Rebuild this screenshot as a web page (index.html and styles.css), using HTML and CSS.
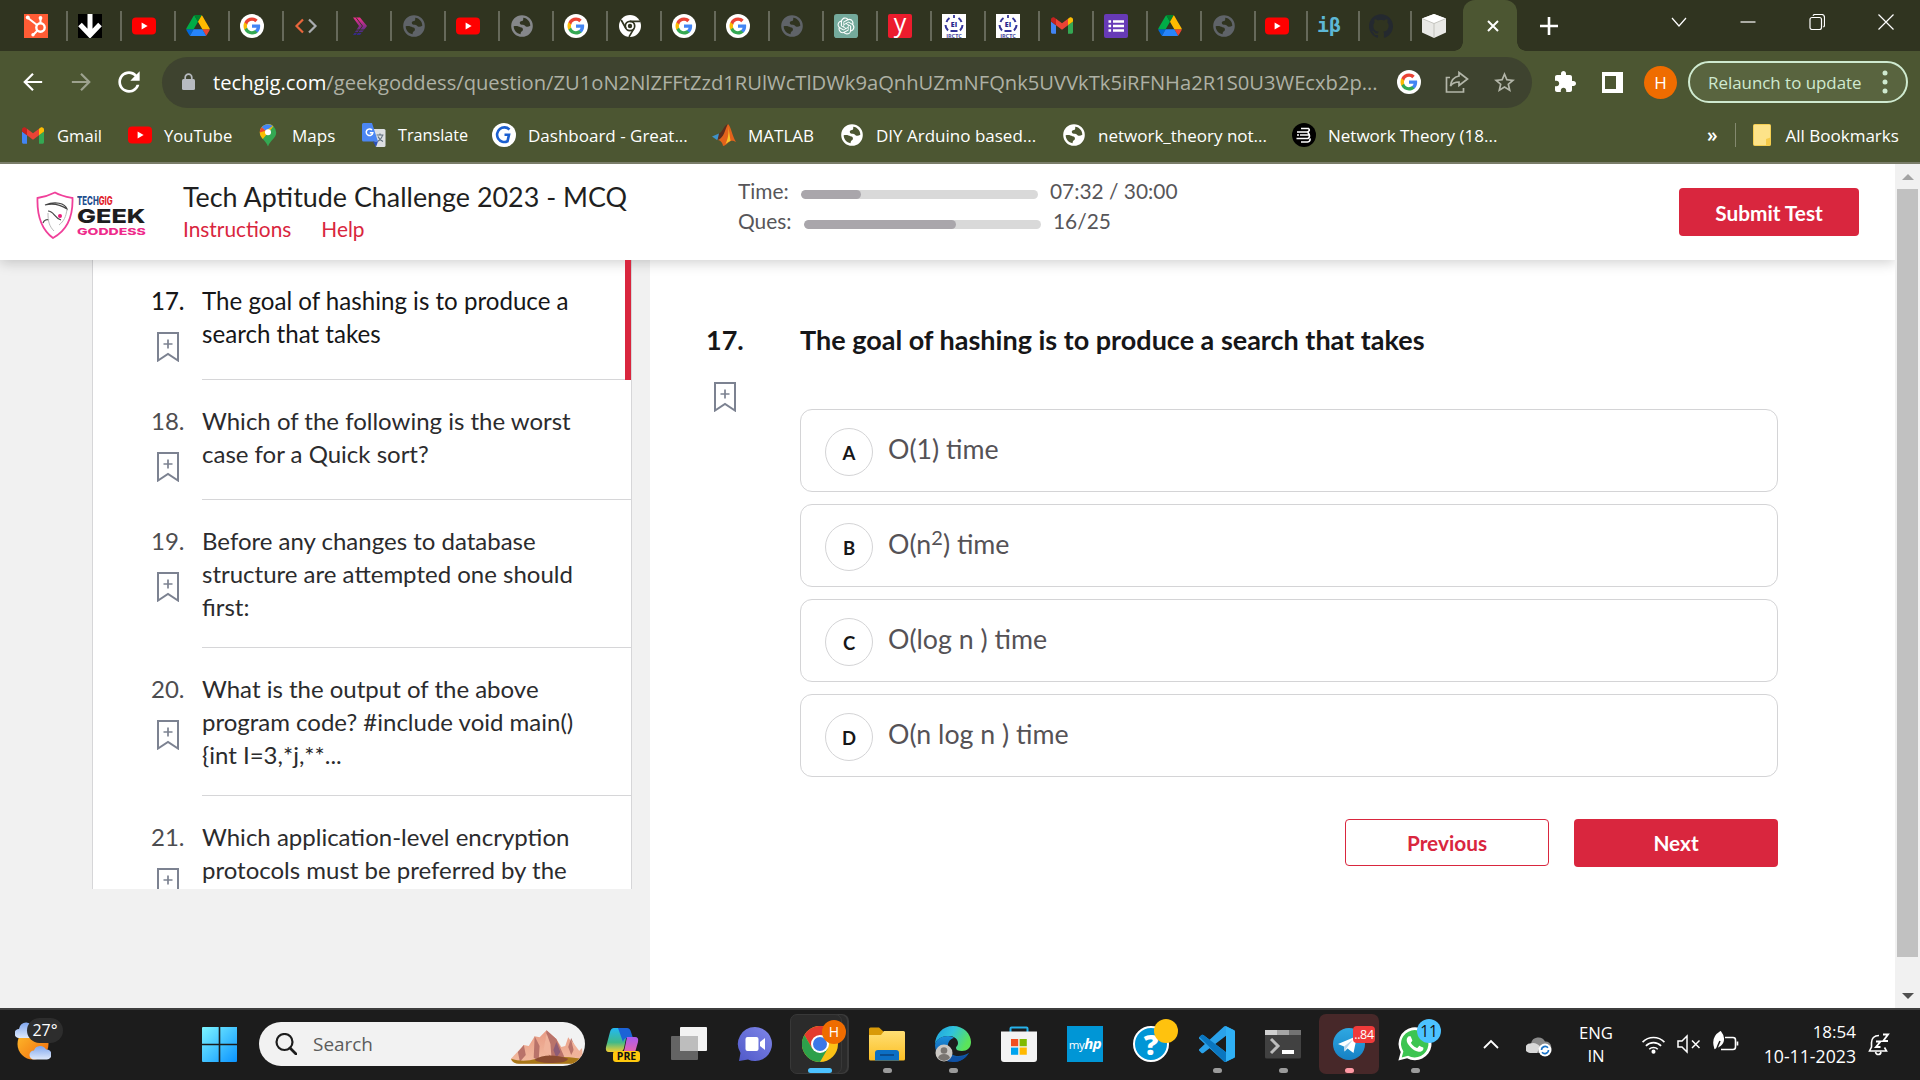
FILE: index.html
```html
<!DOCTYPE html>
<html lang="en">
<head>
<meta charset="utf-8">
<title>Tech Aptitude Challenge 2023 - MCQ</title>
<link rel="stylesheet" href="styles.css">
</head>
<body>
<svg class="defs" aria-hidden="true">
  <defs>
    <linearGradient id="gFlame" x1="0" y1="0" x2="0" y2="1"><stop offset="0" stop-color="#f2308c"/><stop offset="1" stop-color="#2b2a86"/></linearGradient>
    <linearGradient id="gSun" x1="0" y1="0" x2="1" y2="1"><stop offset="0" stop-color="#ffc02e"/><stop offset="1" stop-color="#f06a0c"/></linearGradient>
    <linearGradient id="gCloud" x1="0" y1="0" x2="0" y2="1"><stop offset="0" stop-color="#7fa6ee"/><stop offset="1" stop-color="#dfe9fb"/></linearGradient>
    <linearGradient id="gWin" x1="0" y1="0" x2="1" y2="1"><stop offset="0" stop-color="#7df5ff"/><stop offset="1" stop-color="#0a93ff"/></linearGradient>
    <linearGradient id="gRock" x1="0" y1="0" x2="0" y2="1"><stop offset="0" stop-color="#e89b84"/><stop offset="1" stop-color="#f3bda2"/></linearGradient>
    <linearGradient id="gCopA" x1="0" y1="0" x2="0" y2="1"><stop offset="0" stop-color="#22b8f5"/><stop offset=".6" stop-color="#3fb98a"/><stop offset="1" stop-color="#f4cf2f"/></linearGradient>
    <linearGradient id="gCopB" x1="0" y1="0" x2="0" y2="1"><stop offset="0" stop-color="#a95cf0"/><stop offset="1" stop-color="#f5669a"/></linearGradient>
    <linearGradient id="gChat" x1="0" y1="1" x2="1" y2="0"><stop offset="0" stop-color="#5059c9"/><stop offset="1" stop-color="#7f86e8"/></linearGradient>
    <linearGradient id="gFolder" x1="0" y1="0" x2="0" y2="1"><stop offset="0" stop-color="#ffdf74"/><stop offset="1" stop-color="#fcbf24"/></linearGradient>
    <linearGradient id="gEdgeA" x1="0" y1="0" x2="1" y2=".4"><stop offset="0" stop-color="#1d9fe0"/><stop offset=".5" stop-color="#30c3dc"/><stop offset="1" stop-color="#5be35a"/></linearGradient>
    <linearGradient id="gEdgeB" x1="0" y1="0" x2="0" y2="1"><stop offset="0" stop-color="#1b90dd"/><stop offset="1" stop-color="#0f4c9c"/></linearGradient>
    <linearGradient id="gTg" x1="0" y1="0" x2="0" y2="1"><stop offset="0" stop-color="#2fa8e2"/><stop offset="1" stop-color="#1681c4"/></linearGradient>

    <symbol id="youtube" viewBox="0 0 24 24"><rect y="3.5" width="24" height="17" rx="4" fill="#f00"/><path d="M9.6 8.4v7.2l6-3.6z" fill="#fff"/></symbol>
    <symbol id="drive" viewBox="0 0 87.3 78"><path d="m6.6 66.85 3.85 6.65c.8 1.4 1.95 2.5 3.3 3.3l13.75-23.8h-27.5c0 1.55.4 3.1 1.2 4.5z" fill="#0066da"/><path d="m43.65 25-13.75-23.8c-1.35.8-2.5 1.9-3.3 3.3l-25.4 44a9.06 9.06 0 0 0 -1.2 4.5h27.5z" fill="#00ac47"/><path d="m73.55 76.8c1.35-.8 2.5-1.9 3.3-3.3l1.6-2.75 7.65-13.25c.8-1.4 1.2-2.95 1.2-4.5h-27.502l5.852 11.5z" fill="#ea4335"/><path d="m43.65 25 13.75-23.8c-1.35-.8-2.9-1.2-4.5-1.2h-18.5c-1.6 0-3.15.45-4.5 1.2z" fill="#00832d"/><path d="m59.8 53h-32.3l-13.75 23.8c1.35.8 2.9 1.2 4.5 1.2h50.8c1.6 0 3.15-.45 4.5-1.2z" fill="#2684fc"/><path d="m73.4 26.5-12.7-22c-.8-1.4-1.95-2.5-3.3-3.3l-13.75 23.8 16.15 28h27.45c0-1.55-.4-3.1-1.2-4.5z" fill="#ffba00"/></symbol>
    <symbol id="google" viewBox="-3.5 -3.5 31 31"><circle cx="12" cy="12" r="15.5" fill="#fff"/><path d="M22.56 12.25c0-.78-.07-1.53-.2-2.25H12v4.26h5.92c-.26 1.37-1.04 2.53-2.21 3.31v2.77h3.57c2.08-1.92 3.28-4.74 3.28-8.09z" fill="#4285f4"/><path d="M12 23c2.97 0 5.46-.98 7.28-2.66l-3.57-2.77c-.98.66-2.23 1.06-3.71 1.06-2.86 0-5.29-1.93-6.16-4.53H2.18v2.84C3.99 20.53 7.7 23 12 23z" fill="#34a853"/><path d="M5.84 14.09c-.22-.66-.35-1.36-.35-2.09s.13-1.43.35-2.09V7.07H2.18C1.43 8.55 1 10.22 1 12s.43 3.45 1.18 4.93l2.85-2.22.81-.62z" fill="#fbbc05"/><path d="M12 5.38c1.62 0 3.06.56 4.21 1.64l3.15-3.15C17.45 2.09 14.97 1 12 1 7.7 1 3.99 3.47 2.18 7.07l3.66 2.84c.87-2.6 3.3-4.53 6.16-4.53z" fill="#ea4335"/></symbol>
    <symbol id="gmail" viewBox="52 42 88 66"><path d="M58 108h14V74L52 59v43c0 3.32 2.69 6 6 6" fill="#4285f4"/><path d="M120 108h14c3.32 0 6-2.69 6-6V59l-20 15" fill="#34a853"/><path d="M120 48v26l20-15v-8c0-7.42-8.47-11.65-14.4-7.2" fill="#fbbc04"/><path d="M72 74V48l24 18 24-18v26L96 92" fill="#ea4335"/><path d="M52 51v8l20 15V48l-5.6-4.2c-5.94-4.45-14.4-.22-14.4 7.2" fill="#c5221f"/></symbol>
    <symbol id="globe" viewBox="0 0 24 24"><path fill-rule="evenodd" d="M12 1.2a10.8 10.8 0 1 0 0 21.6a10.8 10.8 0 0 0 0-21.6zM13.2 3.8C17.4 4.2 20.3 7.8 20.3 11.8C18 13.4 15.8 13 14.8 11.6C13.800 10.300 11 11.400 10 9.800C9.200 8.200 10.600 7.200 12 7.100C13.200 7 13.400 5.500 13.200 3.800zM3.700 12.300C6.500 11.500 9 12.400 10.400 13.300C12.200 13.600 13.200 14.400 12.900 16C12.400 17.700 10.600 17.200 10.600 20.200C6.500 19.500 3.700 16.300 3.700 12.300z" fill="currentColor"/></symbol>
    <symbol id="bookmark" viewBox="0 0 22 30"><path d="M1 1h20v27.500l-10-6.500-10 6.500z" fill="none" stroke="#7c8291" stroke-width="2"/><path d="M11 7.500v9M6.500 12h9" stroke="#7c8291" stroke-width="1.700"/></symbol>
    <symbol id="hubspot" viewBox="0 0 24 24"><path d="M0 0h24v24H0z" fill="#ff5c35"/><g fill="none" stroke="#fff" stroke-width="2"><circle cx="16.500" cy="13.500" r="4.200" stroke-width="2.400"/><path d="M16.500 9V4.500M13 11 4 4M13.500 16.500l-4 4"/></g><g fill="#fff"><circle cx="16.500" cy="4" r="1.900"/><circle cx="3.800" cy="3.500" r="2"/><circle cx="9" cy="20.800" r="1.700"/></g></symbol>
    <symbol id="chromemono" viewBox="0 0 24 24"><circle cx="12" cy="12" r="11" fill="#fff"/><g fill="none" stroke="#303420" stroke-width="1.700"><circle cx="12" cy="12" r="4.700"/><path d="M12 7.300h10M8 14.500 3.200 6M16 14.400l-5 8.500"/></g><circle cx="12" cy="12" r="2.200" fill="#303420"/></symbol>
    <symbol id="openai" viewBox="-5 -5 34 34"><rect x="-5" y="-5" width="34" height="34" rx="4" fill="#74aa9c"/><path fill="#fff" d="M22.282 9.821a5.985 5.985 0 0 0-.516-4.91 6.046 6.046 0 0 0-6.51-2.9A6.065 6.065 0 0 0 4.981 4.182a5.985 5.985 0 0 0-3.998 2.9 6.046 6.046 0 0 0 .743 7.097 5.98 5.98 0 0 0 .51 4.911 6.051 6.051 0 0 0 6.515 2.9A5.985 5.985 0 0 0 13.26 24a6.056 6.056 0 0 0 5.772-4.206 5.99 5.99 0 0 0 3.997-2.9 6.056 6.056 0 0 0-.747-7.073zm-9.022 12.608a4.476 4.476 0 0 1-2.876-1.04l.141-.081 4.779-2.758a.795.795 0 0 0 .392-.681v-6.737l2.02 1.168a.071.071 0 0 1 .038.052v5.583a4.504 4.504 0 0 1-4.494 4.494zM3.599 18.304a4.471 4.471 0 0 1-.535-3.014l.142.085 4.783 2.759a.771.771 0 0 0 .781 0l5.843-3.369v2.332a.08.08 0 0 1-.033.062L9.74 19.95a4.499 4.499 0 0 1-6.141-1.646zM2.341 7.896a4.485 4.485 0 0 1 2.366-1.973V11.600a.766.766 0 0 0 .388.676l5.814 3.355-2.020 1.168a.076.076 0 0 1-.071 0l-4.830-2.786A4.504 4.504 0 0 1 2.341 7.872zm16.596 3.855-5.833-3.387L15.119 7.200a.076.076 0 0 1 .071 0l4.830 2.791a4.494 4.494 0 0 1-.676 8.104v-5.677a.790.790 0 0 0-.407-.667zm2.011-3.023-.142-.085-4.774-2.782a.776.776 0 0 0-.785 0L9.409 9.230V6.897a.066.066 0 0 1 .028-.061l4.830-2.787a4.499 4.499 0 0 1 6.680 4.660zM8.307 12.863l-2.020-1.164a.080.080 0 0 1-.038-.057V6.074a4.499 4.499 0 0 1 7.376-3.454l-.142.081L8.704 5.459a.795.795 0 0 0-.393.681zm1.097-2.366 2.602-1.500 2.607 1.500v2.999l-2.597 1.500-2.607-1.500z"/></symbol>
    <symbol id="institute" viewBox="0 0 24 24"><path d="M0 0h24v24H0z" fill="#fff"/><g fill="none" stroke="#34349a"><path d="M7.500 4A8 8 0 0 0 4.500 8M3.500 11q0 3 2.500 5.500M16.500 4A8 8 0 0 1 19.500 8M20.500 11q0 3-2.500 5.500" stroke-width="2"/><path d="M12 1v3M8.500 17h7" stroke-width="1.800"/></g><text x="12" y="12.500" text-anchor="middle" font-size="7" font-weight="800" fill="#26268c" font-family="Open Sans">EI</text><text x="12" y="23.600" text-anchor="middle" font-size="5.500" font-weight="700" fill="#4a4aa0" font-family="Open Sans">IRCTC</text></symbol>
    <symbol id="forms" viewBox="0 0 24 24"><rect width="24" height="24" rx="2" fill="#673ab7"/><path d="M9 7.500h11M9 12h11M9 16.500h11M4.500 7.500h2.600M4.500 12h2.600M4.500 16.500h2.600" stroke="#fff" stroke-width="2.400"/></symbol>
  </defs>
</svg>

<header class="browser">
  <div class="tabstrip">
    <div class="tab"><svg class="fav"><use href="#hubspot"/></svg></div>
    <div class="tab"><svg class="fav" viewBox="0 0 24 24"><path d="M0 0h24v24H0z" fill="#000"/><path d="M12 0v20M2 10.500 12 21l10-10.500" fill="none" stroke="#fff" stroke-width="5"/></svg></div>
    <div class="tab"><svg class="fav"><use href="#youtube"/></svg></div>
    <div class="tab"><svg class="fav fav-drive"><use href="#drive"/></svg></div>
    <div class="tab"><svg class="fav"><use href="#google"/></svg></div>
    <div class="tab"><svg class="fav" viewBox="0 0 24 24" fill="none" stroke-width="2.200"><path d="M9 5.500 2.500 12 9 18.500" stroke="#e8663c"/><path d="m15 5.500 6.500 6.500-6.500 6.500" stroke="#a9acb0"/></svg></div>
    <div class="tab"><svg class="fav" viewBox="0 0 24 24"><path d="M5 3.500h7l7 8.500-7 9H5l6-9z" fill="url(#gFlame)"/><path d="m8 3.500 6.500 8.500L8 21M4 16h14M4 18.500h13" fill="none" stroke="#303420" stroke-width=".9"/></svg></div>
    <div class="tab"><svg class="fav globe-dim"><use href="#globe"/></svg></div>
    <div class="tab"><svg class="fav"><use href="#youtube"/></svg></div>
    <div class="tab"><svg class="fav globe-mid"><use href="#globe"/></svg></div>
    <div class="tab"><svg class="fav"><use href="#google"/></svg></div>
    <div class="tab"><svg class="fav"><use href="#chromemono"/></svg></div>
    <div class="tab"><svg class="fav"><use href="#google"/></svg></div>
    <div class="tab"><svg class="fav"><use href="#google"/></svg></div>
    <div class="tab"><svg class="fav globe-dim"><use href="#globe"/></svg></div>
    <div class="tab"><svg class="fav"><use href="#openai"/></svg></div>
    <div class="tab"><span class="fav fav-y">y</span></div>
    <div class="tab"><svg class="fav"><use href="#institute"/></svg></div>
    <div class="tab"><svg class="fav"><use href="#institute"/></svg></div>
    <div class="tab"><svg class="fav fav-gmail"><use href="#gmail"/></svg></div>
    <div class="tab"><svg class="fav"><use href="#forms"/></svg></div>
    <div class="tab"><svg class="fav fav-drive"><use href="#drive"/></svg></div>
    <div class="tab"><svg class="fav globe-dim"><use href="#globe"/></svg></div>
    <div class="tab tab-narrow"><svg class="fav"><use href="#youtube"/></svg></div>
    <div class="tab tab-narrow"><span class="fav fav-ib">iβ</span></div>
    <div class="tab tab-narrow"><svg class="fav" viewBox="0 0 24 24"><path fill="#24292f" d="M12 .297c-6.630 0-12 5.373-12 12 0 5.303 3.438 9.800 8.205 11.385.6.113.82-.258.82-.577 0-.285-.01-1.040-.015-2.040-3.338.724-4.042-1.610-4.042-1.610C4.422 18.070 3.633 17.700 3.633 17.700c-1.087-.744.084-.729.084-.729 1.205.084 1.838 1.236 1.838 1.236 1.070 1.835 2.809 1.305 3.495.998.108-.776.417-1.305.760-1.605-2.665-.3-5.466-1.332-5.466-5.930 0-1.310.465-2.380 1.235-3.220-.135-.303-.540-1.523.105-3.176 0 0 1.005-.322 3.300 1.230.960-.267 1.980-.399 3-.405 1.020.006 2.040.138 3 .405 2.280-1.552 3.285-1.230 3.285-1.230.645 1.653.240 2.873.120 3.176.765.840 1.230 1.910 1.230 3.220 0 4.610-2.805 5.625-5.475 5.920.420.360.810 1.096.810 2.220 0 1.606-.015 2.896-.015 3.286 0 .315.210.690.825.570C20.565 22.092 24 17.592 24 12.297c0-6.627-5.373-12-12-12"/></svg></div>
    <div class="tab tab-last"><svg class="fav" viewBox="0 0 24 24"><path d="M12 0 24 4.500v14L12 24 0 18.500v-14z" fill="#e9e9e6"/><path d="M12 0 24 4.500 12 9.500 0 4.500z" fill="#fff"/><path d="M12 9.500v14.500M0 4.500l12 5 12-5" fill="none" stroke="#b9b9b2" stroke-width=".8"/></svg></div>
    <div class="tab-active"><svg viewBox="0 0 14 14"><path d="m2 2 10 10M12 2 2 12" stroke="#fff" stroke-width="2"/></svg></div>
    <svg class="newtab" viewBox="0 0 18 18"><path d="M9 0v18M0 9h18" stroke="#fff" stroke-width="2.600"/></svg>
    <div class="winbuttons">
      <svg viewBox="0 0 16 16"><path d="m1 4 7 8 7-8"/></svg>
      <svg viewBox="0 0 16 16"><path d="M.5 8h15"/></svg>
      <svg viewBox="0 0 16 16"><rect x="1" y="3.500" width="11.500" height="12" rx="2"/><path d="M4 1.800Q4.500.5 6 .5h6.500q3 0 3 3V11q0 1.500-1.200 2"/></svg>
      <svg viewBox="0 0 16 16"><path d="m.5.5 15 15M15.500.5l-15 15"/></svg>
    </div>
  </div>

  <div class="toolbar">
    <svg class="nav" viewBox="0 0 24 24"><path d="M22 12H3M12 3l-9 9 9 9" fill="none" stroke="#fff" stroke-width="2.400"/></svg>
    <svg class="nav nav-off" viewBox="0 0 24 24"><path d="M2 12h19M12 3l9 9-9 9" fill="none" stroke="#fff" stroke-width="2.400"/></svg>
    <svg class="reload" viewBox="3 3 18 18"><path fill="#fff" d="M17.650 6.350C16.200 4.900 14.210 4 12 4c-4.420 0-7.990 3.580-7.990 8s3.570 8 7.990 8c3.730 0 6.840-2.550 7.730-6h-2.080c-.820 2.330-3.040 4-5.650 4-3.310 0-6-2.690-6-6s2.690-6 6-6c1.660 0 3.140.690 4.220 1.780L13 11h7V4z"/></svg>
    <div class="omnibox">
      <svg class="lock" viewBox="0 0 14 18"><rect y="6" width="13" height="11" rx="1.500" fill="#b7bbc0"/><path d="M3.200 7V4.500a3.300 3.300 0 0 1 6.600 0V7" fill="none" stroke="#b7bbc0" stroke-width="1.700"/></svg>
      <span class="url"><b>techgig.com</b>/geekgoddess/question/ZU1oN2NlZFFtZzd1RUlWcTlDWk9aQnhUZmNFQnk5UVVkTk5iRFNHa2R1S0U3WEcxb2p...</span>
      <svg class="fav"><use href="#google"/></svg>
      <svg class="share" viewBox="0 0 24 24" fill="none" stroke="#b3b6a9" stroke-width="1.700"><path d="M5 7.500H1.500v14.500h17v-4"/><path d="M14 6V2.500l8.500 6.500-8.500 6.500V12c-4 0-6.500 1-8.500 4 .5-5 3-9 8.500-10z"/></svg>
      <svg class="star" viewBox="1 1 22 21"><path fill="#b3b6a9" d="M22 9.240l-7.190-.620L12 2 9.190 8.630 2 9.240l5.460 4.730L5.820 21 12 17.270 18.180 21l-1.630-7.030zM12 15.400l-3.760 2.270 1-4.280-3.320-2.880 4.380-.380L12 6.100l1.710 4.040 4.380.380-3.320 2.880 1 4.280z"/></svg>
    </div>
    <svg class="puzzle" viewBox="1 1 22 22"><path fill="#fff" d="M20.500 11H19V7c0-1.100-.9-2-2-2h-4V3.500C13 2.120 11.880 1 10.500 1S8 2.120 8 3.500V5H4c-1.100 0-1.990.9-1.990 2v3.800H3.500c1.490 0 2.700 1.210 2.700 2.700s-1.210 2.700-2.700 2.700H2V20c0 1.100.9 2 2 2h3.800v-1.500c0-1.490 1.210-2.700 2.700-2.700 1.490 0 2.700 1.210 2.700 2.700V22H17c1.100 0 2-.9 2-2v-4h1.500c1.380 0 2.500-1.120 2.500-2.500S21.880 11 20.500 11z"/></svg>
    <span class="sidepanel"></span>
    <span class="avatar">H</span>
    <div class="relaunch"><span>Relaunch to update</span><svg viewBox="0 0 6 24" fill="#cfead0"><circle cx="3" cy="3" r="2.500"/><circle cx="3" cy="12" r="2.500"/><circle cx="3" cy="21" r="2.500"/></svg></div>
  </div>

  <nav class="bookmarks">
    <a class="bm bm-gmail"><svg class="fav-gmail"><use href="#gmail"/></svg>Gmail</a>
    <a class="bm bm-youtube"><svg class="fav"><use href="#youtube"/></svg>YouTube</a>
    <a class="bm bm-maps"><svg class="fav" viewBox="0 0 24 24"><path d="M3.800 9.500a8.200 8.200 0 0 1 16.400 0c0 6-6 7.500-8.200 14C9.800 17 3.800 15.500 3.800 9.500z" fill="#34a853"/><path d="M3.800 9.500c0 2.800 1.400 4.700 3 6.500L17.500 3.300A8.200 8.200 0 0 0 3.800 9.500z" fill="#fbbc04"/><path d="m5.600 4.300 4 3.500L16.900 2.900A8.200 8.200 0 0 0 5.600 4.300z" fill="#4285f4"/><path d="M5.600 4.300a8 8 0 0 0-1.800 5.200l5.800-1.700z" fill="#ea4335"/><circle cx="12" cy="9.300" r="3" fill="#fff"/></svg>Maps</a>
    <a class="bm bm-translate"><svg class="fav" viewBox="0 0 24 24"><path d="M9 6h13a1.500 1.500 0 0 1 1.500 1.500v15A1.500 1.500 0 0 1 22 24h-8z" fill="#dcdfe3"/><path d="M14.500 12h7M18 10.500V12m2.500 0c-.5 3-2.500 5-5 6.500m.5-5c1 2.500 3 4 5 5" fill="none" stroke="#5f6f7d" stroke-width="1.100"/><path d="M1.500 0H10l6 18.500H1.500A1.500 1.500 0 0 1 0 17V1.500A1.500 1.500 0 0 1 1.500 0z" fill="#4b86f3"/><path d="M11 18.500h5L14 24z" fill="#2b50b8"/><path d="M10 7A3.300 3.300 0 1 0 10.800 9.800H7.800" fill="none" stroke="#fff" stroke-width="1.500"/></svg>Translate</a>
    <a class="bm bm-dashboard"><svg class="fav" viewBox="0 0 24 24"><circle cx="12" cy="12" r="12" fill="#fff"/><path d="M17.500 6.500A7.300 7.300 0 1 0 15.500 18.300L17 11.800h-4.500" fill="none" stroke="#1b5fd0" stroke-width="2.600"/></svg>Dashboard - Great...</a>
    <a class="bm bm-matlab"><svg class="fav" viewBox="0 0 24 24"><path d="m0 13.500 7-3 3.500 3.500L5 17z" fill="#3f92c9"/><path d="M7 10.500C11 9 12 2 16 1c-2 6-3 14-10.500 16z" fill="#5b2d1e"/><path d="M16 1c3 2 4.500 13 8 18-3-1.500-4.500-2-7 0-2 1.500-3.500 3.500-6 4-.5-4-3-5.500-5-6C12 15 13 6 16 1z" fill="#e2621b"/><path d="M16 1c1 6 1 13-2.500 20 2-1.500 3-2.500 5-3z" fill="#f9c32b"/></svg>MATLAB</a>
    <a class="bm bm-diy"><svg class="fav"><use href="#globe"/></svg>DIY Arduino based...</a>
    <a class="bm bm-network"><svg class="fav"><use href="#globe"/></svg>network_theory not...</a>
    <a class="bm bm-theory"><svg class="fav" viewBox="0 0 24 24"><circle cx="12" cy="12" r="12" fill="#000"/><path d="M9 5.500h7.500q2 2-1 3.500H5M8 12h9.500M5 12h2M4.500 15.500H16q3-2 0-6M9 19h6.500q3-.5 2.500-3.500" fill="none" stroke="#fff" stroke-width="1.700"/></svg>Network Theory (18...</a>
    <span class="more">»</span>
    <span class="rule"></span>
    <a class="bm bm-all"><svg viewBox="0 0 18 22"><rect x=".5" y=".5" width="17" height="21" rx="1" fill="#fde389" stroke="#f5cf52"/><path d="M13 21.500V15l4.500-1.500v8z" fill="#f6cb49"/></svg>All Bookmarks</a>
  </nav>
</header>

<div class="viewport">
  <div class="page">
    <header class="masthead">
      <div class="brand">
        <svg class="shield" viewBox="0 0 38 48"><path d="M19 1.500C25 5 31 6 36.500 7 37 22 34 38 17 47 5 38 1 22 1.500 7 8 6 14 4 19 1.500z" fill="#fff" stroke="#f0409a" stroke-width="1.800"/><path d="M9 14c8-2 16 0 22 4-2-6-12-8-22-4zM12 20c6 0 6 7 13 9M7 32c1-3 4-4 6-3" fill="none" stroke="#444" stroke-width="1.200"/><path d="M31 18c-1 8-3 12-8 16M12 22c0 8 1 13 6 18" fill="none" stroke="#b9b9b9"/><circle cx="24" cy="25" r="2" fill="#ec1b7c"/></svg>
        <div class="wordmark"><span class="w1"><i>TECH</i>GIG</span><span class="w2">GEEK</span><span class="w3">GODDESS</span></div>
      </div>
      <div class="heading">
        <h1>Tech Aptitude Challenge 2023 - MCQ</h1>
        <div class="links"><a>Instructions</a><a>Help</a></div>
      </div>
      <div class="progress">
        <div class="prow"><span class="plabel">Time:</span><span class="track"><span class="fill" style="width:25.300%"></span></span><span>07:32 / 30:00</span></div>
        <div class="prow"><span class="plabel plabel-q">Ques:</span><span class="track"><span class="fill" style="width:64%"></span></span><span>16/25</span></div>
      </div>
      <button class="btn submit">Submit Test</button>
    </header>

    <div class="content">
      <aside class="sidebar">
        <ol class="qlist">
          <li class="qitem current"><div class="qside"><span>17.</span><svg><use href="#bookmark"/></svg></div><p>The goal of hashing is to produce a search that takes</p></li>
          <li class="qitem"><div class="qside"><span>18.</span><svg><use href="#bookmark"/></svg></div><p>Which of the following is the worst case for a Quick sort?</p></li>
          <li class="qitem"><div class="qside"><span>19.</span><svg><use href="#bookmark"/></svg></div><p>Before any changes to database structure are attempted one should first:</p></li>
          <li class="qitem"><div class="qside"><span>20.</span><svg><use href="#bookmark"/></svg></div><p>What is the output of the above program code? #include void main(){int I=3,*j,**...</p></li>
          <li class="qitem"><div class="qside"><span>21.</span><svg><use href="#bookmark"/></svg></div><p>Which application-level encryption protocols must be preferred by the</p></li>
        </ol>
      </aside>
      <main class="question">
        <div class="qnum"><span>17.</span><svg><use href="#bookmark"/></svg></div>
        <div class="qbody">
          <h2>The goal of hashing is to produce a search that takes</h2>
          <div class="options">
            <div class="option"><span class="letter">A</span><span>O(1) time</span></div>
            <div class="option"><span class="letter">B</span><span>O(n<sup>2</sup>) time</span></div>
            <div class="option"><span class="letter">C</span><span>O(log n ) time</span></div>
            <div class="option"><span class="letter">D</span><span>O(n log n ) time</span></div>
          </div>
          <div class="actions"><button class="btn prev">Previous</button><button class="btn next">Next</button></div>
        </div>
      </main>
    </div>
  </div>
  <div class="scrollbar">
    <svg viewBox="0 0 12 6"><path d="M0 6h12L6 0z" fill="#a3a3a3"/></svg>
    <span class="thumb"></span>
    <svg viewBox="0 0 12 6"><path d="M0 0h12L6 6z" fill="#505050"/></svg>
  </div>
</div>

<footer class="taskbar">
  <div class="weather">
    <svg viewBox="0 0 36 40"><circle cx="18" cy="22" r="15.500" fill="url(#gSun)"/><path d="M4 16a4.500 4.500 0 0 1 0-9 7 7 0 0 1 14 1v8z" fill="url(#gCloud)"/><path d="M19 37.500a4.500 4.500 0 0 1 0-9 6.500 6.500 0 0 1 12-1 5 5 0 0 1 1 10z" fill="url(#gCloud)"/></svg>
    <span class="temp">27°</span>
  </div>
  <div class="slot start"><svg viewBox="0 0 35 35" fill="url(#gWin)"><path d="M1 0h34v34q0 1-1 1H1q-1 0-1-1V1q0-1 1-1z"/><path d="M17.500 0v35M0 17.500h35" stroke="#1c1c1c" stroke-width="1.600"/></svg></div>
  <div class="search">
    <svg class="lens" viewBox="0 0 22 22"><circle cx="9.500" cy="9" r="8" fill="none" stroke="#1d1d1d" stroke-width="2.200"/><path d="m15 15 6 6" stroke="#1d1d1d" stroke-width="2.800" stroke-linecap="round"/></svg>
    <span>Search</span>
    <svg class="rocks" viewBox="0 0 74 34"><path d="M0 29 13 15l5 1 6-10 5 1 7-7 10 9 5 8 4-1 3-9 10 15 4-4 1 12c-3 6-8 4-10 4H8Q0 33 0 29z" fill="url(#gRock)"/><path d="m36 0 10 9 8 18-14 3-5-16zM24 6l5 10-1 15-5-3zM13 15l2 10-6 7-2-10zM61 8l4 9-4 8-3-8z" fill="#b9736a"/><path d="m36 3 4 11 1 13-8-7zM61 10l9 12-5 4z" fill="#f0b39b"/><path d="m46 12 4 10-4 6-3-8z" fill="#8d5c76"/><path d="M0 29q12 4 26 0 20-4 46 0-3 5-8 5H8Q2 34 0 29z" fill="#a87718"/><path d="M24 30q12-8 34-1-2 4-12 4-18 1-22-3z" fill="#8a4b30"/></svg>
  </div>
  <div class="apps">
    <div class="slot"><svg class="ico" viewBox="0 0 36 36"><path d="M9 2h11q3 0 2.500 3L19 22q-1 4-5 4H4q-4 0-3-5L5 6q1-4 4-4z" fill="url(#gCopA)"/><path d="M13 2h9q3 0 4 4l2 6h-6q-3 0-4 4z" fill="#1c63d6"/><path d="M22 11h8q4 0 3 5l-4 14H15q4-3 5-9z" fill="url(#gCopB)"/></svg><span class="pre">PRE</span></div>
    <div class="slot"><svg class="ico" viewBox="0 0 36 36"><rect y="10" width="27" height="24" rx="1" fill="#646464"/><rect x="9" y="1" width="27" height="24" rx="1" fill="#f3f3f3"/><path d="M9 10h18v15H9z" fill="#bdbdbd"/></svg></div>
    <div class="slot"><svg class="ico" viewBox="0 0 36 36"><path d="M18 1a17 17 0 1 1-7 32.500L2 35l1.500-8A17 17 0 0 1 18 1z" fill="url(#gChat)"/><rect x="8.500" y="11" width="13" height="14" rx="2" fill="#fff"/><path d="m23 16 5-4v12l-5-4z" fill="#fff"/></svg></div>
    <div class="slot tile chrome"><svg class="ico" viewBox="0 0 36 36"><circle cx="18" cy="18" r="18" fill="#fbc116"/><path d="M18 9h15.600L33 8A18 18 0 0 0 2.400 9l7.800 13.500z" fill="#e33b2e"/><path d="M2.400 9A18 18 0 0 0 18 36l7.800-13.500L18 26l-7.800-3.500z" fill="#2da04b"/><circle cx="18" cy="18" r="9" fill="#fff"/><circle cx="18" cy="18" r="7" fill="#3b78e7"/></svg><span class="badge badge-h">H</span><i class="line"></i></div>
    <div class="slot"><svg class="ico" viewBox="0 0 36 36"><path d="M0 3q0-1.500 1.500-1.500H10L15 6v5H0z" fill="#d99a08"/><path d="M0 9h12l3-4h19.500Q36 5 36 6.500V33q0 1.500-1.500 1.500h-33Q0 34.500 0 33z" fill="url(#gFolder)"/><path d="M6 34.500V27q0-3 3-3h18q3 0 3 3v7.500z" fill="#0c6fc4"/><path d="M11 29h14" stroke="#0a4d8f" stroke-width="2"/></svg><i class="dot"></i></div>
    <div class="slot"><svg class="ico" viewBox="0 0 36 36"><path d="M0 19C0 8 8 0 18 0c11 0 18 8 18 16 0 6-4 9-9 9-4 0-6-1-6-3 0-1.500 2-2 2-5 0-4-4-7-9-7C7 10 1 13 0 19z" fill="url(#gEdgeA)"/><path d="M0 19c1-6 7-9 13-9 3 0 5 1 6 2-5 1-7 6-6 11 2 8 12 9 21 4-4 6-10 9-16 9C8 36 0 29 0 19z" fill="url(#gEdgeB)"/><path d="M10 20c0 9 8 12 14 11 4 0 8-2 10-4-4 6-9 9-15 9-7-1-11-9-9-16z" fill="#0f52a6"/><circle cx="9" cy="27" r="8.500" fill="#cbc8c4"/><circle cx="9" cy="24.500" r="3.300" fill="#797571"/><path d="M3 32q1-4 6-4t6 4q-6 6-12 0z" fill="#797571"/></svg><i class="dot"></i></div>
    <div class="slot"><svg class="ico" viewBox="0 0 36 36"><path d="M9.500 7V2.500q0-1 1-1h15q1 0 1 1V7" fill="none" stroke="#26b1ea" stroke-width="2"/><path d="M0 5.500h36V33q0 3-3 3H3q-3 0-3-3z" fill="#f3f3f3"/><path d="M10 13h7.200v7.200H10z" fill="#f25022"/><path d="M18.600 13h7.200v7.200h-7.200z" fill="#7fba00"/><path d="M10 21.600h7.200v7.200H10z" fill="#00a4ef"/><path d="M18.600 21.600h7.200v7.200h-7.200z" fill="#ffb900"/></svg></div>
    <div class="slot"><span class="myhp">my<b>hp</b></span></div>
    <div class="slot"><span class="help">?</span><span class="badge badge-warn"></span></div>
    <div class="slot"><svg class="ico" viewBox="0 0 24 24"><path fill="#2aa2ea" d="M23.150 2.587L18.210.210a1.494 1.494 0 0 0-1.705.290l-9.460 8.630-4.120-3.128a.999.999 0 0 0-1.276.057L.327 7.261A1 1 0 0 0 .326 8.740L3.899 12 .326 15.260a1 1 0 0 0 .001 1.479L1.650 17.940a.999.999 0 0 0 1.276.057l4.120-3.128 9.460 8.630a1.492 1.492 0 0 0 1.704.290l4.942-2.377A1.500 1.500 0 0 0 24 20.060V3.939a1.500 1.500 0 0 0-.850-1.352zm-5.146 14.861L10.826 12l7.178-5.448v10.896z"/><path d="M.33 7.300 1.650 6.060a1 1 0 0 1 1.276-.057L18 17.450V23.600a1.500 1.500 0 0 1-1.500-.100z" fill="#0a76c0"/><path d="M18 .3v23.400l5.200-2.300a1.500 1.500 0 0 0 .8-1.350V3.940a1.500 1.500 0 0 0-.850-1.350z" fill="#2fb0f5"/></svg><i class="dot"></i></div>
    <div class="slot"><svg class="ico" viewBox="0 0 36 36"><path d="M0 4h36v27q0 1.500-1.500 1.500h-33Q0 32.500 0 31z" fill="#414141"/><path d="M0 4h12v5H0z" fill="#d0d0d0"/><path d="M12 4h12v5H12z" fill="#a5a5a5"/><path d="M24 4h12v5H24z" fill="#737373"/><path d="m6 13 7 7-7 7" fill="none" stroke="#bdbdbd" stroke-width="3"/><path d="M17 24h12v4H17z" fill="#fff"/></svg><i class="dot"></i></div>
    <div class="slot tile-alert"><svg class="ico" viewBox="0 0 36 36"><circle cx="18" cy="18" r="16" fill="url(#gTg)"/><path d="m7 18 19-8-3.500 17-6-4.500-3 3-.5-5z" fill="#fff"/><path d="m13 20.500 9-7-6.500 8.500-2 3.500z" fill="#b9d6ec"/></svg><span class="count">..84</span><i class="dot dot-alert"></i></div>
    <div class="slot"><svg class="ico" viewBox="-1 -1 26 26"><path d="M0 24l1.700-6.200A11.900 11.900 0 1 1 6.300 22.300z" fill="#fff"/><path d="M2.400 21.700l1.200-4.300A9.900 9.900 0 1 1 7 20.500z" fill="#3cc551"/><path fill="#fff" d="M17.472 14.382c-.297-.149-1.758-.867-2.030-.967-.273-.099-.471-.148-.670.150-.197.297-.767.966-.940 1.164-.173.199-.347.223-.644.075-.297-.150-1.255-.463-2.390-1.475-.883-.788-1.480-1.761-1.653-2.059-.173-.297-.018-.458.130-.606.134-.133.298-.347.446-.520.149-.174.198-.298.298-.497.099-.198.050-.371-.025-.520-.075-.149-.669-1.612-.916-2.207-.242-.579-.487-.5-.669-.510-.173-.008-.371-.010-.570-.010-.198 0-.520.074-.792.372-.272.297-1.040 1.016-1.040 2.479 0 1.462 1.065 2.875 1.213 3.074.149.198 2.096 3.200 5.077 4.487.709.306 1.262.489 1.694.625.712.227 1.360.195 1.871.118.571-.085 1.758-.719 2.006-1.413.248-.694.248-1.289.173-1.413-.074-.124-.272-.198-.570-.347"/></svg><span class="badge badge-wa">11</span><i class="dot"></i></div>
  </div>
  <div class="tray">
    <svg class="chev" viewBox="0 0 16 10"><path d="m1 9 7-7 7 7" fill="none" stroke="#fff" stroke-width="1.800"/></svg>
    <svg class="cloud" viewBox="0 0 26 22"><path d="M5 18a5 5 0 0 1 0-9.500A7.500 7.500 0 0 1 19 6.500a5.500 5.500 0 0 1 1 11.500z" fill="#8b8b8b"/><path d="M4 18a4.500 4.500 0 0 1 0-9.500q6-2 10 3l-3 6.500z" fill="#d8d8d8"/><circle cx="19" cy="15" r="6.500" fill="#fff"/><path d="M15.500 15a3.700 3.700 0 0 1 6.500-2.300M22.500 15a3.700 3.700 0 0 1-6.500 2.300" fill="none" stroke="#1a73c7" stroke-width="1.600"/></svg>
    <div class="lang"><span>ENG</span><span>IN</span></div>
    <svg class="wifi" viewBox="0 0 26 20" fill="none" stroke="#fff" stroke-width="1.700"><path d="M1.500 7.500a16 16 0 0 1 23 0M5 11.500a11 11 0 0 1 16 0M8.500 15a6.500 6.500 0 0 1 9 0"/><circle cx="13" cy="17.500" r="1.300" fill="#fff"/></svg>
    <svg class="vol" viewBox="0 0 24 20" fill="none" stroke="#fff" stroke-width="1.500"><path d="M1 7h4l5-5v16l-5-5H1zM15 6.500l7.500 7.500M22.500 6.500 15 14"/></svg>
    <svg class="batt" viewBox="0 0 26 22" fill="none" stroke="#fff" stroke-width="1.600"><path d="M12 6.500h8q2.500 0 2.500 2.500v7q0 2.500-2.500 2.500H8M24.500 10.500v4"/><path d="M7.500 1C10 4 11 8 9.500 11.500S4 16 2 17C0 11 1 5 7.500 1z" fill="#fff"/><path d="M3 20Q5 14 7 10" stroke="#1c1c1c"/></svg>
    <div class="clock"><span>18:54</span><span class="date">10-11-2023</span></div>
    <svg class="bell" viewBox="0 0 24 24" fill="none" stroke="#fff" stroke-width="1.600"><path d="M12 3.500C7 3.500 4.500 6.500 4.500 10.500V15L2.500 19h17l-2-3.500M8.500 20q.5 2.500 2.800 2.500T14 20"/><path d="M9 9.500h4.500L9 15h4.500M16 2.500h5L16.200 9H21" stroke-width="1.900"/></svg>
  </div>
</footer>
</body>
</html>
```

FILE: styles.css
```css
* { box-sizing: border-box; }
body {
  margin: 0;
  width: 1920px;
  height: 1080px;
  overflow: hidden;
  display: flex;
  flex-direction: column;
  background: #fff;
  font-family: Lato, "Liberation Sans", sans-serif;
}
svg { display: block; flex: none; }
.defs { position: absolute; width: 0; height: 0; }
h1, h2, p, ol { margin: 0; padding: 0; font-weight: 400; }

/* Browser chrome */
.browser {
  flex: none;
  height: 164px;
  background: #4c5632;
  border-bottom: 2px solid #7a7d6a;
  font-family: "Open Sans", "Noto Sans", sans-serif;
  color: #fff;
}
.tabstrip { display: flex; height: 51px; padding-left: 13px; background: #303420; }
.tab {
  position: relative;
  width: 54px;
  flex: none;
  display: flex;
  align-items: center;
  padding-left: 11px;
}
.tab::after {
  content: "";
  position: absolute;
  right: -1px;
  top: 11px;
  width: 2px;
  height: 30px;
  background: #66695a;
}
.tab-narrow { width: 52px; padding-left: 10px; }
.tab-last { width: 50px; padding-left: 11px; }
.tab-last::after { display: none; }
.fav { width: 24px; height: 24px; flex: none; }
.fav-drive { height: 21px; }
.fav-gmail { width: 22px; height: 17px; margin-left: 1px; }
.globe-dim { color: #5f6368; }
.globe-mid { color: #85878a; }
.fav-y { background: #ec1c2d; border-radius: 2px; font: 500 25px/17px "Open Sans", sans-serif; text-align: center; }
.fav-ib { font: 700 20px/22px "DejaVu Sans Mono", monospace; color: #5db8d6; display: flex; justify-content: center; }
.tab-active {
  position: relative;
  width: 54px;
  margin-left: 2px;
  border-radius: 12px 12px 0 0;
  background: #4c5632;
  display: flex;
  align-items: center;
  justify-content: center;
  padding-left: 5px;
}
.tab-active::before, .tab-active::after {
  content: "";
  position: absolute;
  bottom: 0;
  width: 9px;
  height: 9px;
}
.tab-active::before { left: -9px; background: radial-gradient(circle at 0 0, transparent 8.500px, #4c5632 9px); }
.tab-active::after { right: -9px; background: radial-gradient(circle at 100% 0, transparent 8.500px, #4c5632 9px); }
.tab-active svg { width: 14px; height: 14px; }
.newtab { width: 18px; height: 18px; margin: 17px 0 0 23px; }
.winbuttons { margin: 14px 26px 0 auto; display: flex; gap: 53px; }
.winbuttons svg { width: 16px; height: 16px; fill: none; stroke: #fff; stroke-width: 1.200; }

.toolbar { height: 62px; display: flex; align-items: center; }
.nav { width: 22px; height: 22px; margin-left: 22px; }
.nav-off { margin-left: 26px; opacity: .45; }
.reload { width: 24px; height: 24px; margin-left: 25px; }
.omnibox {
  width: 1370px;
  height: 51px;
  margin-left: 21px;
  border-radius: 26px;
  background: #3e432f;
  display: flex;
  align-items: center;
}
.lock { width: 14px; height: 18px; margin-left: 20px; }
.url { width: 1184px; margin-left: 17px; font-size: 20.180px; line-height: 28px; color: #aeb1a5; white-space: nowrap; }
.url b { font-weight: 400; color: #fff; }
.share { width: 24px; height: 24px; margin-left: 24px; }
.star { width: 23px; height: 22px; margin-left: 24px; }
.puzzle { width: 22px; height: 22px; margin-left: 22px; }
.sidepanel { width: 21px; height: 21px; margin-left: 26px; border: 4px solid #fff; border-right-width: 7px; border-left-width: 3px; }
.avatar {
  width: 33px;
  height: 33px;
  margin-left: 21px;
  border-radius: 50%;
  background: #ef6c00;
  font-size: 17px;
  line-height: 33px;
  text-align: center;
}
.relaunch {
  width: 220px;
  height: 42px;
  margin-left: 11px;
  padding: 0 18px;
  border: 2px solid #cfead0;
  border-radius: 21px;
  background: #59643f;
  display: flex;
  align-items: center;
  justify-content: space-between;
  color: #cfead0;
  font-size: 16.900px;
}
.relaunch svg { width: 6px; height: 24px; }

.bookmarks { height: 44px; display: flex; align-items: center; font-size: 17px; white-space: nowrap; }
.bm { display: flex; align-items: center; gap: 12px; flex: none; }
.bm-gmail { width: 107px; padding-left: 21px; font-size: 16.600px; gap: 13px; }
.bm-youtube { margin-left: 21px; width: 105px; font-size: 16.600px; }
.bm-maps { margin-left: 23px; width: 81px; }
.bm-translate { margin-left: 25px; width: 106px; font-size: 16.200px; }
.bm-dashboard { margin-left: 24px; width: 196px; }
.bm-matlab { margin-left: 24px; width: 103px; }
.bm-diy { margin-left: 25px; width: 198px; }
.bm-network { margin-left: 24px; width: 206px; }
.bm-theory { margin-left: 24px; width: 207px; }
.more { margin-left: 208px; font-size: 19px; line-height: 20px; font-weight: 600; }
.rule { width: 1px; height: 24px; margin-left: 17px; background: #84896f; }
.bm-all { margin-left: 17px; gap: 15px; }
.bm-all svg { width: 18px; height: 22px; }

/* Page */
.viewport { flex: none; height: 844px; display: flex; }
.page { width: 1895px; display: flex; flex-direction: column; background: #fff; }
.masthead {
  position: relative;
  flex: none;
  height: 96px;
  display: flex;
  align-items: flex-start;
  padding-left: 36px;
  background: #fff;
  box-shadow: 0 3px 12px rgba(0, 0, 0, .18);
  clip-path: inset(0 0 -16px 0);
}
.brand { width: 147px; display: flex; padding-top: 27px; }
.shield { width: 38px; height: 48px; }
.wordmark { display: flex; flex-direction: column; padding: 4px 0 0 3px; font-family: Inter, sans-serif; font-weight: 800; }
.wordmark span { transform-origin: 0 0; white-space: nowrap; }
.w1 { width: 48px; height: 13px; font-size: 11.500px; line-height: 13px; color: #e3262f; transform: scaleX(.68); }
.w1 i { font-style: normal; color: #1d4f8f; }
.w2 { width: 52px; height: 18px; font-size: 19px; line-height: 18px; color: #1d1d1f; transform: scaleX(1.330); }
.w3 { width: 50px; height: 11px; font-size: 9.500px; line-height: 11px; color: #ee2b8b; transform: scaleX(1.480); }
.heading { width: 555px; padding-top: 16px; }
.heading h1 { font-size: 26.880px; line-height: 33px; color: #1f1f21; white-space: nowrap; }
.links { display: flex; gap: 30px; font-size: 20.850px; line-height: 32px; color: #d9263e; }
.progress { padding-top: 12px; font-size: 20.900px; line-height: 30px; color: #575659; }
.prow { display: flex; align-items: center; height: 30px; }
.plabel { width: 63px; }
.plabel-q { width: 66px; }
.track { width: 237px; height: 9px; margin: 6px 12px 0 0; border-radius: 5px; background: #d9d9d9; overflow: hidden; }
.fill { display: block; height: 9px; border-radius: 5px; background: #a9a6ab; }
.btn {
  display: flex;
  align-items: center;
  justify-content: center;
  padding: 0;
  border: 0;
  border-radius: 4px;
  background: #d9263e;
  color: #fff;
  font: 700 20.800px/26px Lato, sans-serif;
}
.submit { width: 180px; height: 48px; margin: 24px 36px 0 auto; padding-top: 2px; }

.content { flex: 1; display: flex; min-height: 0; }
.sidebar { width: 650px; padding-left: 92px; background: #f1f1f1; }
.qlist { width: 540px; height: 629px; overflow: hidden; border: 1px solid #d6d6d8; border-width: 0 1px; background: #fff; list-style: none; }
.qitem { position: relative; display: flex; min-height: 120px; padding-left: 58px; font-size: 24px; line-height: 33px; color: #2b2b2d; }
.qside { width: 51px; padding-top: 24px; color: #4d4d50; }
.qside span { display: block; }
.qside svg { width: 22px; height: 30px; margin: 15px 0 0 6px; }
.qitem p { flex: 1; padding: 24px 50px 24px 0; border-bottom: 1px solid #d6d6d8; overflow-wrap: anywhere; }
.current { color: #161618; font-weight: 500; }
.current p { font-size: 24.120px; }
.current .qside { color: #161618; }
.current::after { content: ""; position: absolute; right: 0; top: 0; width: 6px; height: 120px; background: #d9263e; }

.question { flex: 1; display: flex; padding: 63px 117px 0 56px; }
.qnum { width: 94px; font-size: 27px; line-height: 34px; font-weight: 700; color: #161618; }
.qnum span { display: block; }
.qnum svg { width: 22px; height: 30px; margin: 25px 0 0 8px; }
.qbody { flex: 1; }
.qbody h2 { font-size: 27px; line-height: 34px; font-weight: 700; color: #161618; white-space: nowrap; }
.options { margin-top: 52px; display: flex; flex-direction: column; gap: 12px; }
.option { display: flex; height: 83px; padding: 18px 0 0 24px; border: 1px solid #d4d4d6; border-radius: 12px; font-size: 26.750px; line-height: 42px; color: #555256; }
.letter { width: 48px; height: 48px; margin-right: 15px; border: 1px solid #d4d4d6; border-radius: 50%; text-align: center; font-size: 18.500px; line-height: 48px; font-weight: 700; color: #161618; }
.option sup { font-size: 20px; line-height: 0; vertical-align: 9px; }
.actions { display: flex; justify-content: flex-end; gap: 25px; margin-top: 42px; }
.actions .btn { width: 204px; height: 48px; }
.actions .prev { height: 47px; border: 1px solid #d9263e; background: #fff; color: #d9263e; }

.scrollbar { width: 25px; display: flex; flex-direction: column; align-items: center; background: #f1f1f1; padding: 10px 0 9px; }
.scrollbar svg { width: 12px; height: 6px; }
.thumb { width: 21px; height: 768px; margin: 9px 0 auto; background: #c1c1c1; }

/* Taskbar */
.taskbar {
  flex: none;
  height: 72px;
  display: flex;
  align-items: flex-start;
  padding-top: 4px;
  border-top: 2px solid #3e3e3e;
  background: #1c1c1c;
  color: #fff;
  font-family: "Open Sans", "Noto Sans", sans-serif;
}
.weather { position: relative; width: 189px; height: 60px; padding: 8px 0 0 15px; }
.weather svg { width: 36px; height: 40px; }
.temp { position: absolute; left: 27px; top: 4px; width: 36px; height: 25px; border-radius: 13px; background: #2d2d2d; font-size: 16px; line-height: 24px; text-align: center; }
.slot { position: relative; width: 60px; height: 60px; flex: none; display: flex; align-items: center; justify-content: center; }
.start svg { width: 35px; height: 35px; }
.ico { width: 36px; height: 36px; }
.search { width: 326px; height: 44px; margin: 8px 8px 0 10px; border-radius: 22px; background: #f2f2f2; display: flex; align-items: center; color: #5c5c5c; font-size: 18.950px; overflow: hidden; }
.lens { width: 22px; height: 22px; margin: 0 16px 0 16px; }
.rocks { width: 73px; height: 34px; margin: 6px 1px 0 auto; }
.apps { display: flex; gap: 6px; }
.tile { border-radius: 7px; background: #2b2b2b; border: 1px solid #383838; }
.chrome { margin: 0 9px 0 -1px; width: 52px; box-shadow: 6px 0 0 -1px #2b2b2b, 7px 0 0 0 #3a3a3a; }
.chrome .ico { margin-left: 8px; }
.tile-alert { width: 60px; border-radius: 7px; background: #472829; }
.dot { position: absolute; left: 26px; bottom: 1px; width: 9px; height: 5px; border-radius: 3px; background: #9b9b9b; }
.dot-alert { background: #ff99a4; }
.line { position: absolute; left: 17px; bottom: 0; width: 24px; height: 5px; border-radius: 3px; background: #4cc2ff; }
.badge { position: absolute; top: 5px; width: 24px; height: 24px; border-radius: 50%; text-align: center; line-height: 24px; }
.badge-h { left: 31px; background: #ef6c00; font-size: 14px; }
.badge-warn { left: 33px; background: #ffc20e; }
.badge-wa { left: 32px; background: #4cc2ff; color: #111; font-size: 15.500px; }
.pre { position: absolute; left: 20px; top: 37px; width: 27px; height: 11px; border-radius: 3px; background: #ffc90e; color: #111; font: 700 10.500px/11px "Open Sans", sans-serif; text-align: center; }
.myhp { width: 36px; height: 36px; background: #0096d6; font-size: 11.500px; line-height: 34px; text-align: center; white-space: nowrap; letter-spacing: -.5px; }
.myhp b { font-size: 15px; font-style: italic; }
.help { width: 36px; height: 36px; border: 2px solid #fff; border-radius: 50%; background: #0096d6; font-size: 29px; line-height: 31px; font-weight: 800; text-align: center; }
.count { position: absolute; left: 34px; top: 12px; width: 22px; height: 17px; border-radius: 4px; background: #f03a3a; font-size: 12.500px; line-height: 17px; text-align: center; letter-spacing: -.3px; }
.tray { display: flex; align-items: center; height: 60px; }
.chev { width: 16px; height: 10px; margin-left: 38px; }
.cloud { width: 26px; height: 22px; margin: 4px 0 0 27px; }
.lang { width: 60px; margin-left: 14px; display: flex; flex-direction: column; font-size: 16.700px; line-height: 23px; text-align: center; }
.wifi { width: 25px; height: 19px; margin-left: 15px; }
.vol { width: 24px; height: 20px; margin-left: 11px; }
.batt { width: 26px; height: 22px; margin: -4px 0 0 12px; }
.clock { width: 110px; margin-left: 7px; display: flex; flex-direction: column; font-size: 17px; line-height: 24px; text-align: right; }
.date { font-size: 17.700px; }
.bell { width: 24px; height: 24px; margin-left: 11px; }
```
